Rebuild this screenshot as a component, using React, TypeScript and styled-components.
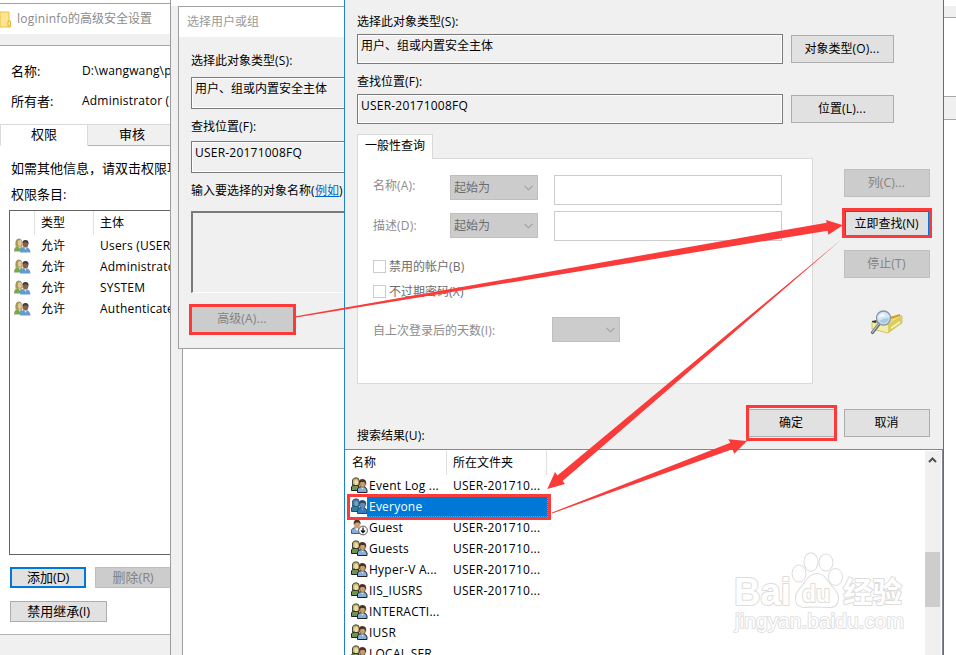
import React from "react";
import styled, { createGlobalStyle } from "styled-components";

const GlobalStyle = createGlobalStyle`
  * { box-sizing: border-box; }
  body { margin: 0; background: #fff; overflow: hidden; }
`;

const Desktop = styled.main`
  position: relative;
  width: 956px;
  height: 655px;
  overflow: hidden;
  background: #fff;
  color: #000;
  font: 12px/16px "Open Sans", "Noto Sans CJK SC", sans-serif;
  white-space: nowrap;
`;

const Latin = styled.span<{ $ls: number }>`
  letter-spacing: ${(p) => p.$ls}px;
`;

/** Spaces the latin runs of a mixed label, leaving ideographs at full width. */
function Label({ text, ls = 0.22 }: { text: string; ls?: number }) {
  return (
    <>
      {text.split(/([\x20-\x7e]+)/).map((part, i) =>
        i % 2 ? <Latin key={i} $ls={ls}>{part}</Latin> : part
      )}
    </>
  );
}

/* ---------- windows ---------- */

const BackWindow = styled.section`
  position: absolute;
  left: 171px;
  top: 6px;
  width: 785px;
  height: 649px;
  display: flex;
  background: #f0f0f0;
`;
const BackPane = styled.div`
  flex: 0 0 761px;
  margin-left: 11px;
  border-left: 1px solid #a0a0a0;
  background: #fff;
`;
const BackEdge = styled.div`
  flex: 1;
  display: grid;
  grid-template-rows: 12px 79px 23px 1fr;
  > div { border-bottom: 1px solid #a8a8a8; background: #f0f0f0; }
  > div:nth-child(even) { background: #fff; }
  > div:last-child { border: 0; }
`;

const SecurityWindow = styled.section`
  position: absolute;
  left: 0;
  top: 0;
  width: 171px;
  height: 655px;
  overflow: hidden;
  border-right: 1px solid #9c9c9c;
  display: flex;
  flex-direction: column;
  background: #fff;
`;
const SecurityTitle = styled.header`
  flex: 0 0 31px;
  margin-top: 3px;
  border-top: 1px solid #a0a0a0;
  display: flex;
  align-items: center;
  gap: 6px;
  color: #8a8a8a;
`;
const Strip = styled.div`
  flex: 0 0 12px;
  background: #f0f0f0;
  border-bottom: 1px solid #a8a8a8;
`;
const Facts = styled.dl`
  margin: 0;
  padding: 10px 0 0 11px;
  flex: 0 0 78px;
  display: grid;
  grid-template-columns: 71px 200px;
  grid-auto-rows: 30px;
  align-items: center;
  font-size: 13px;
  dt { margin-top: -1px; }
  dd { margin: 0; font-size: 12px; }
`;
const Tabs = styled.div`
  flex: 0 0 22px;
  display: flex;
`;
const Tab = styled.div<{ $active?: boolean; $w: number }>`
  width: ${(p) => p.$w}px;
  flex: none;
  border: 1px solid #d9d9d9;
  border-bottom-color: ${(p) => (p.$active ? "#fff" : "#b4b4b4")};
  border-left-width: ${(p) => (p.$active ? 1 : 0)}px;
  background: ${(p) => (p.$active ? "#fff" : "#f0f0f0")};
  text-align: center;
  font-size: 13px;
  line-height: 18px;
`;
const Hint = styled.p`
  margin: 0;
  padding-left: 11px;
  font-size: 13px;
  line-height: 26px;
  &:first-of-type { padding-top: 9px; }
`;
const EntryTable = styled.div`
  flex: 0 0 345px;
  margin: 3px 0 0 9px;
  border: 1px solid #646464;
  border-right: 0;
`;
const EntryRow = styled.div<{ $head?: boolean }>`
  display: grid;
  grid-template-columns: 25px 59px 1fr;
  height: ${(p) => (p.$head ? 24 : 21)}px;
  align-items: center;
  > * { padding-left: 6px; }
  > svg { padding: 0; margin-left: 4px; }
  ${(p) => p.$head && `
    > * { height: 24px; line-height: 24px; border-right: 1px solid #e0e0e0; }
    > *:last-child { border: 0; }
  `}
`;
const Actions = styled.div<{ $top: number }>`
  display: flex;
  gap: 9px;
  padding: ${(p) => p.$top}px 0 0 10px;
`;
const Footer = styled.footer`
  margin-top: 12px;
  flex: 1;
  border-top: 1px solid #b4b4b4;
  background: #f0f0f0;
`;

const Button = styled.button<{ $w: number; $h?: number; $primary?: boolean; $size?: number }>`
  flex: none;
  width: ${(p) => p.$w}px;
  height: ${(p) => p.$h ?? 28}px;
  padding: 0 ${(p) => (p.$h ? 0 : 1)}px ${(p) => (p.$h ? 2 : 0)}px 0;
  border: ${(p) => (p.$primary ? "2px solid #0078d7" : "1px solid #adadad")};
  background: #e1e1e1;
  color: #000;
  font: inherit;
  font-size: ${(p) => p.$size ?? 12}px;
  line-height: 16px;
  &:disabled { background: #ccc; border-color: #bfbfbf; color: #838383; }
`;

const PickerWindow = styled.section`
  position: absolute;
  left: 178px;
  top: 6px;
  width: 300px;
  height: 343px;
  border: 1px solid #a0a0a0;
  background: #f0f0f0;
  display: flex;
  flex-direction: column;
`;
const PickerTitle = styled.header`
  flex: 0 0 30px;
  padding-left: 8px;
  line-height: 30px;
  color: #999;
  background: #fff;
`;
const PickerBody = styled.div`
  padding-left: 12px;
  display: flex;
  flex-direction: column;
  align-items: flex-start;
`;
const FieldLabel = styled.div<{ $h: number; $drop?: number }>`
  height: ${(p) => p.$h}px;
  padding-top: ${(p) => p.$drop ?? 0}px;
  a { color: #0066cc; text-decoration: underline; }
`;
const ReadOnlyField = styled.div<{ $w: number; $h: number; $x?: number }>`
  width: ${(p) => p.$w}px;
  height: ${(p) => p.$h}px;
  border: 1px solid #7a7a7a;
  box-shadow: inset 0 0 0 1px #fff;
  padding: 3px ${(p) => p.$x ?? 3}px;
`;
const NamesBox = styled.div`
  width: 280px;
  height: 82px;
  margin-bottom: 12px;
  border: 2px solid #7a7a7a;
  border-bottom: 1px solid #fff;
`;

const FindWindow = styled.section`
  position: absolute;
  left: 344px;
  top: 0;
  width: 600px;
  height: 655px;
  overflow: hidden;
  border: solid #1d80ce;
  border-width: 0 1px;
  background: #f0f0f0;
  display: flex;
  flex-direction: column;
`;
const FieldRow = styled.div`
  flex: 0 0 30px;
  display: flex;
  align-items: center;
  gap: 8px;
  padding-left: 12px;
`;
const Caption = styled.div<{ $h: number; $drop: number }>`
  flex: 0 0 ${(p) => p.$h}px;
  padding: ${(p) => p.$drop}px 0 0 12px;
`;
const QueryArea = styled.div`
  flex: 0 0 260px;
  padding: 10px 0 0 12px;
  display: flex;
  gap: 31px;
`;
const QueryTabs = styled.div`
  width: 456px;
  display: flex;
  flex-direction: column;
`;
const QueryTab = styled.div`
  width: 76px;
  height: 25px;
  margin-bottom: -1px;
  z-index: 1;
  border: 1px solid #d9d9d9;
  border-bottom: 0;
  background: #fff;
  text-align: center;
  line-height: 22px;
`;
const QueryPanel = styled.div`
  height: 226px;
  border: 1px solid #d9d9d9;
  background: #fff;
  padding: 16px 0 0 15px;
  color: #8c8c8c;
`;
const QueryRow = styled.div<{ $h: number; $labelDrop: number; $selectDrop: number }>`
  height: ${(p) => p.$h}px;
  display: grid;
  grid-template-columns: 77px 88px 228px;
  align-items: start;
  > :nth-child(1) { margin-top: ${(p) => p.$labelDrop}px; }
  > :nth-child(2) { margin-top: ${(p) => p.$selectDrop}px; }
  > :nth-child(3) { margin-left: 16px; }
`;
const Select = styled.div<{ $w: number }>`
  width: ${(p) => p.$w}px;
  height: 25px;
  padding: 0 4px 0 3px;
  border: 1px solid #bfbfbf;
  background: #ccc;
  color: #6d6d6d;
  display: flex;
  align-items: center;
  justify-content: space-between;
`;
const TextInput = styled.div`
  width: 228px;
  height: 30px;
  border: 1px solid #ccc;
`;
const CheckRow = styled.div`
  height: 25px;
  display: flex;
  align-items: center;
  gap: 3px;
  color: #6d6d6d;
`;
const CheckBox = styled.span`
  width: 13px;
  height: 13px;
  border: 1px solid #ccc;
`;
const DaysRow = styled.div`
  display: flex;
  align-items: center;
  justify-content: space-between;
  width: 247px;
  margin-top: 13px;
  > span { padding-top: 3px; }
`;
const SideButtons = styled.div`
  width: 88px;
  padding-top: 35px;
  display: flex;
  flex-direction: column;
  gap: 12.5px;
  > svg { margin: 19px 0 0 26px; }
`;
const ConfirmRow = styled.div`
  flex: 0 0 65px;
  display: flex;
  gap: 9px;
  padding: 25px 13px 0 12px;
  > :first-child { flex: 1; padding-top: 19px; }
`;
const Results = styled.div`
  flex: 1;
  display: flex;
  border-top: 1px solid #828790;
  border-right: 1px solid #828790;
  background: #fff;
`;
const ResultTable = styled.div`
  flex: 1;
  padding-top: 1px;
`;
const ResultRow = styled.div<{ $head?: boolean }>`
  height: ${(p) => (p.$head ? 24 : 21)}px;
  display: grid;
  grid-template-columns: ${(p) => (p.$head ? "102px 100px" : "22px 86px 100px")};
  align-items: center;
  > svg { margin-left: 6px; }
  ${(p) => p.$head && `
    > * { height: 24px; padding-left: 7px; line-height: 24px; border-right: 1px solid #e0e0e0; }
    > * + * { padding-left: 6px; }
  `}
  > [data-name] { padding-left: 2px; }
`;
const SelectedName = styled.span`
  grid-column: 2 / 4;
  width: 181px;
  height: 21px;
  padding-left: 2px;
  line-height: 19px;
  background: #0078d7;
  color: #fff;
  border: 1px dotted #d88a3c;
  border-left-width: 0;
`;
const ScrollBar = styled.div`
  width: 16px;
  margin: 1px 1px 0 0;
  background: #f0f0f0;
  display: flex;
  flex-direction: column;
  > svg { margin: 5px 0 0 3px; }
`;
const Thumb = styled.div`
  width: 15px;
  height: 55px;
  margin-top: 88px;
  background: #cdcdcd;
`;
const Overlay = styled.svg`
  position: absolute;
  left: 0;
  top: 0;
`;

/* ---------- drawings ---------- */

const Chevron = () => (
  <svg width="9" height="6" viewBox="0 0 9 6">
    <path d="M.5.8 4.5 4.8 8.5.8" fill="none" stroke="#a0a0a0" strokeWidth="1.1" />
  </svg>
);

const UsersIcon = () => (
  <svg width="17" height="15" viewBox="0 0 17 15">
    <path d="M0 13.5Q0 8 5 8q4 0 5 5.5Z" fill="#78a850" />
    <path d="M4 8h3l-1 3Z" fill="#d8e4c0" />
    <path d="M1.500 8.500Q.5.500 5 .5q4 0 3.500 8Z" fill="#a8975a" />
    <ellipse cx="5.800" cy="5" rx="2" ry="3" fill="#e6c797" />
    <path d="M6 14.500Q6 9 11 9q5 0 5.500 5.500Z" fill="#6499d4" />
    <path d="M10 9h3l-1.500 3Z" fill="#dce9f8" />
    <ellipse cx="11.500" cy="6" rx="2.800" ry="3.500" fill="#8a6047" />
    <path d="M8.500 5.500Q8 2 11.500 2t3 4Q13 4 11 4.300Z" fill="#3f3d42" />
  </svg>
);

const GroupIcon = ({ selected = false }: { selected?: boolean }) => {
  const c = selected
    ? { hair: "#437b9b", face: "#79a0b8", a: "#337f96", b: "#307cc4", dark: "#204d76", line: "#164d7a" }
    : { hair: "#c8b660", face: "#f0dab0", a: "#6f9350", b: "#85aed8", dark: "#4d3027", line: "#222" };
  return (
    <svg width="17" height="17" viewBox="0 0 17 17">
      <path d="M.5 13.500V10Q1 8 4 8h3l2 5.500Z" fill={c.a} stroke={c.line} />
      <path d="M1.500 8V3Q2 1 5 .8t3.300 3.200v4Z" fill={c.hair} stroke={c.line} strokeWidth=".8" />
      <ellipse cx="5.200" cy="5.400" rx="1.900" ry="2.700" fill={c.face} />
      <path d="M6.500 15.500V12q1-2.500 4-2.500h2q3 1 3.500 3.500v2.500Z" fill={c.b} stroke={c.line} />
      <path d="m10 10 1.500 2.500L13 10Z" fill={selected ? "#8abce4" : "#fff"} />
      <ellipse cx="11.500" cy="7" rx="2.900" ry="3.600" fill={selected ? "#678cab" : "#c99d72"} stroke={c.line} strokeWidth=".5" />
      <path d="M8 6.500Q7.500 2 11.500 2q4.500 0 3.600 6L13.500 5H10Z" fill={c.dark} />
    </svg>
  );
};

const GuestIcon = () => (
  <svg width="17" height="17" viewBox="0 0 17 17">
    <path d="M.5 14.500V11Q1 9 5 8.500h2q4 1 4 6Z" fill="#85aed8" stroke="#303f50" strokeWidth=".8" />
    <path d="m4 9 2 3 2-3Z" fill="#fff" />
    <ellipse cx="6" cy="5.500" rx="3" ry="4" fill="#cda078" />
    <path d="M2.800 5.500Q2 .8 6 .8t3.500 5L8 3.500H5Z" fill="#4d3027" />
    <circle cx="12" cy="11.500" r="4.400" fill="#fff" stroke="#555" />
    <path d="M12 8.500v5M10 11.500l2 2 2-2" fill="none" stroke="#111" strokeWidth="1.300" />
  </svg>
);

const FolderIcon = () => (
  <svg width="11" height="17" viewBox="0 0 11 17">
    <path d="M0 1h9v11h1.500v4H0Z" fill="#ffe58f" stroke="#e8c04a" />
    <path d="M8 15v-5h2.500v5Z" fill="#fff0b0" stroke="#e0b32f" />
  </svg>
);

const SearchFolderIcon = () => (
  <svg width="34" height="25" viewBox="0 0 34 25">
    <path d="M2 12 18 7l14-2v8L18 23l-16-4Z" fill="#e6dc78" />
    <path d="m2 12 17 3 13-9v7L18 23l-16-4Z" fill="#f3eda8" stroke="#b7aa4a" strokeWidth=".6" />
    <path d="m18 15 14-9v7L18 23Z" fill="#d9cd62" />
    <path d="m21 17 9-6v2l-9 6Z" fill="#f7f3bd" />
    <path d="M20 7 30 4v2l-9 3Z" fill="#d9971e" />
    <path d="m2 11 5-1-1 3-4-1Z" fill="#333" />
    <path d="M9.500 13.500 2.500 22.500" stroke="#66717c" strokeWidth="3.200" strokeLinecap="round" />
    <path d="M9 13.500 2.500 22" stroke="#c0c8d0" strokeWidth="1.200" strokeLinecap="round" />
    <circle cx="13.500" cy="8" r="7" fill="#cce5f8" fillOpacity=".9" stroke="#8798ab" strokeWidth="1.300" />
    <path d="M8.500 8q1-5 6-4.500Q13 6 18 6q-5 0-9.500 2Z" fill="#fff" fillOpacity=".8" />
    <path d="M9 11q5-3 10-3-1 5-6 5.500Z" fill="#a9c9e4" />
  </svg>
);

const Watermark = () => (
  <g fill="#fff" stroke="#dcdcdc" strokeWidth="2" paintOrder="stroke" strokeLinejoin="round"
    fontFamily='"Liberation Sans", "Noto Sans CJK SC", sans-serif'>
    <text x="734" y="605" fontSize="38" fontWeight="700" textLength="57" lengthAdjust="spacingAndGlyphs">Bai</text>
    <ellipse cx="799" cy="573.500" rx="6.500" ry="8" />
    <ellipse cx="811" cy="562" rx="6.500" ry="8.700" />
    <ellipse cx="826" cy="562.500" rx="6.500" ry="8" />
    <ellipse cx="835.500" cy="577" rx="6.500" ry="8" />
    <path d="M817 574c8 0 10 8 16 14 8 8 6 19-3 19-8 0-17-1-25 0-10 0-12-10-5-18 6-6 8-15 17-15Z" />
    <text x="802" y="602" fontSize="24" fontWeight="700" textLength="28" lengthAdjust="spacingAndGlyphs">du</text>
    <text x="843" y="603" fontSize="29" fontWeight="700" textLength="59" lengthAdjust="spacingAndGlyphs">经验</text>
    <text x="735" y="628" fontSize="20" textLength="169" lengthAdjust="spacingAndGlyphs" strokeWidth="1.700">jingyan.baidu.com</text>
  </g>
);

const Annotations = () => (
  <Overlay width="956" height="655" viewBox="0 0 956 655">
    <Watermark />
    <g fill="none" stroke="#fb3a3a" strokeWidth="3">
      <rect x="190.500" y="305.500" width="104" height="28" />
      <rect x="843.500" y="209.500" width="87" height="27" />
      <rect x="747.500" y="406.500" width="88" height="33" />
      <rect x="348.500" y="495.500" width="201" height="23" />
    </g>
    <g fill="#fb3a3a">
      <path d="M296 316.300 826.700 222.700 826 220 843 225.300 828.300 234.700 827.700 230.700 296 317.500Z" />
      <path d="M842 239 557.400 475.500 555 472 547.300 489 565 484 562.600 481Z" />
      <path d="M552 512.500 730.300 442.700 728.300 439.300 747 441 734.300 453.700 732.300 449.300 552 513.500Z" />
    </g>
  </Overlay>
);

/* ---------- data ---------- */

const entries = ["Users (USER-20171008FQ\\Users)", "Administrators (USER)", "SYSTEM", "Authenticated Users"];

const results: { name: string; folder?: string; kind?: "guest" | "selected" }[] = [
  { name: "Event Log ...", folder: "USER-201710..." },
  { name: "Everyone", kind: "selected" },
  { name: "Guest", folder: "USER-201710...", kind: "guest" },
  { name: "Guests", folder: "USER-201710..." },
  { name: "Hyper-V A...", folder: "USER-201710..." },
  { name: "IIS_IUSRS", folder: "USER-201710..." },
  { name: "INTERACTI..." },
  { name: "IUSR" },
  { name: "LOCAL SER..." },
];

export default function App() {
  return (
    <Desktop>
      <GlobalStyle />
      <BackWindow>
        <BackPane />
        <BackEdge><div /><div /><div /><div /></BackEdge>
      </BackWindow>

      <SecurityWindow>
        <SecurityTitle><FolderIcon /><span><Label text="logininfo的高级安全设置" ls={0.25} /></span></SecurityTitle>
        <Strip />
        <Facts>
          <dt>名称:</dt><dd><Label text="D:\wangwang\public" ls={0.15} /></dd>
          <dt>所有者:</dt><dd><Label text="Administrator (USER)" /></dd>
        </Facts>
        <Tabs><Tab $active $w={88}>权限</Tab><Tab $w={89}>审核</Tab></Tabs>
        <Hint>如需其他信息，请双击权限项目。</Hint>
        <Hint>权限条目:</Hint>
        <EntryTable>
          <EntryRow $head><span /><span>类型</span><span>主体</span></EntryRow>
          {entries.map((e) => (
            <EntryRow key={e}><UsersIcon /><span>允许</span><span><Label text={e} /></span></EntryRow>
          ))}
        </EntryTable>
        <Actions $top={12}>
          <Button $w={76} $h={21} $primary $size={13}><Label text="添加(D)" ls={-0.3} /></Button>
          <Button $w={76} $h={21} $size={13} disabled><Label text="删除(R)" ls={-0.3} /></Button>
        </Actions>
        <Actions $top={13}>
          <Button $w={97} $h={21} $size={13}><Label text="禁用继承(I)" ls={-0.3} /></Button>
        </Actions>
        <Footer />
      </SecurityWindow>

      <PickerWindow>
        <PickerTitle>选择用户或组</PickerTitle>
        <PickerBody>
          <FieldLabel $h={40} $drop={16}><Label text="选择此对象类型(S):" /></FieldLabel>
          <ReadOnlyField $w={280} $h={32}>用户、组或内置安全主体</ReadOnlyField>
          <FieldLabel $h={32} $drop={10}><Label text="查找位置(F):" /></FieldLabel>
          <ReadOnlyField $w={280} $h={32}><Label text="USER-20171008FQ" /></ReadOnlyField>
          <FieldLabel $h={38} $drop={10}>输入要选择的对象名称<Label text="(" ls={0.5} /><a>例如</a>)</FieldLabel>
          <NamesBox />
          <Button $w={103} disabled><Label text="高级(A)..." /></Button>
        </PickerBody>
      </PickerWindow>

      <FindWindow>
        <Caption $h={34} $drop={14}><Label text="选择此对象类型(S):" /></Caption>
        <FieldRow>
          <ReadOnlyField $w={426} $h={30}>用户、组或内置安全主体</ReadOnlyField>
          <Button $w={103}><Label text="对象类型(O)..." /></Button>
        </FieldRow>
        <Caption $h={30} $drop={10}><Label text="查找位置(F):" /></Caption>
        <FieldRow>
          <ReadOnlyField $w={426} $h={30}><Label text="USER-20171008FQ" /></ReadOnlyField>
          <Button $w={103}><Label text="位置(L)..." /></Button>
        </FieldRow>
        <QueryArea>
          <QueryTabs>
            <QueryTab>一般性查询</QueryTab>
            <QueryPanel>
              <QueryRow $h={36} $labelDrop={3} $selectDrop={0}>
                <span><Label text="名称(A):" /></span><Select $w={88}>起始为<Chevron /></Select><TextInput />
              </QueryRow>
              <QueryRow $h={43} $labelDrop={7} $selectDrop={2}>
                <span><Label text="描述(D):" /></span><Select $w={88}>起始为<Chevron /></Select><TextInput />
              </QueryRow>
              <CheckRow><CheckBox /><span><Label text="禁用的帐户(B)" /></span></CheckRow>
              <CheckRow><CheckBox /><span><Label text="不过期密码(X)" /></span></CheckRow>
              <DaysRow><span><Label text="自上次登录后的天数(I):" /></span><Select $w={68}><span /><Chevron /></Select></DaysRow>
            </QueryPanel>
          </QueryTabs>
          <SideButtons>
            <Button $w={86} disabled><Label text="列(C)..." /></Button>
            <Button $w={86} $primary><Label text="立即查找(N)" ls={0} /></Button>
            <Button $w={86} disabled><Label text="停止(T)" /></Button>
            <SearchFolderIcon />
          </SideButtons>
        </QueryArea>
        <ConfirmRow>
          <span><Label text="搜索结果(U):" /></span>
          <Button $w={87}>确定</Button>
          <Button $w={86}>取消</Button>
        </ConfirmRow>
        <Results>
          <ResultTable>
            <ResultRow $head><span>名称</span><span>所在文件夹</span></ResultRow>
            {results.map((r) => (
              <ResultRow key={r.name}>
                {r.kind === "guest" ? <GuestIcon /> : <GroupIcon selected={r.kind === "selected"} />}
                {r.kind === "selected"
                  ? <SelectedName><Label text={r.name} /></SelectedName>
                  : <span data-name><Label text={r.name} ls={0.25} /></span>}
                {r.folder && <span><Label text={r.folder} ls={0.25} /></span>}
              </ResultRow>
            ))}
          </ResultTable>
          <ScrollBar>
            <svg width="9" height="8" viewBox="0 0 9 8"><path d="m1 6 3.500-3.500L8 6" fill="none" stroke="#505050" strokeWidth="2" /></svg>
            <Thumb />
          </ScrollBar>
        </Results>
      </FindWindow>

      <Annotations />
    </Desktop>
  );
}
